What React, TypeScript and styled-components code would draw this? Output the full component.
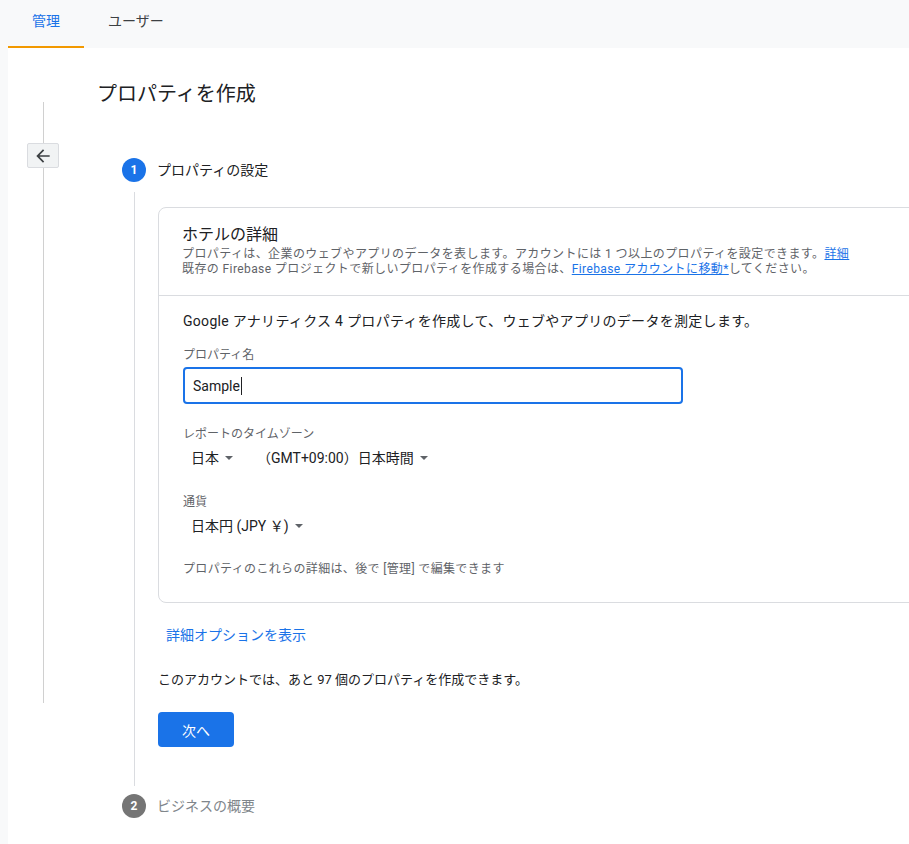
import React from "react";
import styled, { createGlobalStyle } from "styled-components";

const GlobalStyle = createGlobalStyle`
  html, body {
    margin: 0;
    padding: 0;
    overflow: hidden;
    background: #f8f9fa;
  }
  body {
    font-family: Roboto, "Noto Sans CJK JP", "Noto Sans", sans-serif;
    color: #202124;
  }
  * {
    box-sizing: border-box;
  }
`;

const Page = styled.div`
  width: 909px;
  height: 844px;
  padding-left: 8px;
  display: flex;
  flex-direction: column;
  overflow: hidden;
`;

const TabBar = styled.div`
  height: 48px;
  display: flex;
  flex-shrink: 0;
`;

const Tab = styled.div<{ active?: boolean }>`
  height: 48px;
  padding: 0 24px 4px;
  display: flex;
  align-items: center;
  font-size: 14px;
  line-height: 20px;
  color: ${(p) => (p.active ? "#1a73e8" : "#3c4043")};
  border-bottom: 2px solid ${(p) => (p.active ? "#f29900" : "transparent")};
`;

const Main = styled.div`
  flex: 1;
  background: #fff;
  display: flex;
  overflow: hidden;
`;

// 左側のレール（戻るボタン付き）
const Rail = styled.div`
  width: 70px;
  flex-shrink: 0;
  display: flex;
  flex-direction: column;
  align-items: center;
  padding-top: 54px;
`;

const RailLine = styled.div<{ h: number }>`
  width: 1px;
  height: ${(p) => p.h}px;
  background: #d0d0d0;
`;

const BackButton = styled.button`
  width: 32px;
  height: 25px;
  padding: 0;
  border: 1px solid #dadce0;
  border-radius: 2px;
  background: #f1f3f4;
  display: flex;
  align-items: center;
  justify-content: center;
  color: #3c4043;
`;

const Content = styled.div`
  padding-left: 19px;
  display: flex;
  flex-direction: column;
  min-width: 0;
`;

const Title = styled.h1`
  margin: 32px 0 0;
  font-size: 20px;
  line-height: 28px;
  font-weight: 400;
  color: #202124;
`;

const StepHeader = styled.div<{ top?: number }>`
  margin-top: ${(p) => p.top ?? 0}px;
  margin-left: 25px;
  height: 24px;
  display: flex;
  align-items: center;
  gap: 11px;
`;

const StepNum = styled.div<{ done?: boolean }>`
  width: 24px;
  height: 24px;
  border-radius: 50%;
  background: ${(p) => (p.done ? "#1a73e8" : "#757575")};
  color: #fff;
  font-size: 12px;
  font-weight: 700;
  display: flex;
  align-items: center;
  justify-content: center;
`;

const StepLabel = styled.span<{ muted?: boolean }>`
  font-size: 14px;
  line-height: 24px;
  color: ${(p) => (p.muted ? "#80868b" : "#202124")};
`;

const StepBody = styled.div`
  margin-left: 25px;
  display: flex;
`;

const LineCol = styled.div`
  width: 24px;
  flex-shrink: 0;
  display: flex;
  justify-content: center;
  padding: 10px 0 8px;
`;

const StepLine = styled.div`
  width: 1px;
  background: #dadce0;
`;

const StepContent = styled.div`
  margin-left: 12px;
  padding: 25px 0 47px;
  display: flex;
  flex-direction: column;
  align-items: flex-start;
`;

const Card = styled.div`
  width: 780px;
  border: 1px solid #dadce0;
  border-radius: 8px;
`;

const CardHead = styled.div`
  padding: 15px 23px 18px;
  border-bottom: 1px solid #dadce0;
`;

const CardTitle = styled.div`
  font-size: 16px;
  line-height: 24px;
  color: #202124;
`;

const Sub = styled.div`
  font-size: 12px;
  line-height: 15px;
  letter-spacing: 0.4px;
  color: #5f6368;
`;

const Link = styled.a`
  color: #1a73e8;
  text-decoration: underline;
`;

const CardBody = styled.div`
  padding: 15px 24px 25px;
  display: flex;
  flex-direction: column;
  align-items: flex-start;
`;

const Lead = styled.div`
  font-size: 14px;
  line-height: 20px;
  letter-spacing: 0.3px;
  color: #202124;
`;

const Label = styled.div<{ top: number }>`
  margin-top: ${(p) => p.top}px;
  font-size: 12px;
  line-height: 16px;
  color: #5f6368;
`;

const Field = styled.div`
  margin-top: 4px;
  width: 500px;
  height: 37px;
  border: 2px solid #1a73e8;
  border-radius: 4px;
  padding: 0 8px;
  display: flex;
  align-items: center;
  font-size: 14px;
  color: #202124;
`;

const TextCaret = styled.span`
  width: 1px;
  height: 18px;
  background: #202124;
  margin-left: 1px;
`;

const SelectRow = styled.div`
  margin-top: 6px;
  display: flex;
  gap: 8px;
`;

const Select = styled.div`
  padding: 0 8px;
  display: flex;
  align-items: center;
  gap: 6px;
  font-size: 14px;
  line-height: 20px;
  color: #202124;
`;

const Note = styled.div`
  margin-top: 25px;
  font-size: 12px;
  line-height: 16px;
  letter-spacing: 0.35px;
  color: #5f6368;
`;

const TextButton = styled.button`
  margin-top: 14px;
  padding: 8px;
  border: none;
  background: none;
  font-family: inherit;
  font-size: 14px;
  line-height: 20px;
  color: #1a73e8;
`;

const Remain = styled.div`
  margin-top: 17px;
  font-size: 13px;
  line-height: 20px;
  color: #202124;
`;

const Primary = styled.button`
  margin-top: 22px;
  width: 76px;
  height: 35px;
  border: none;
  border-radius: 4px;
  background: #1a73e8;
  color: #fff;
  font-family: inherit;
  font-size: 14px;
`;

const DropCaret = () => (
  <svg width="8" height="4" viewBox="0 0 8 4">
    <polygon points="0,0 8,0 4,4" fill="#5f6368" />
  </svg>
);

const ArrowBack = () => (
  <svg width="20" height="20" viewBox="0 0 24 24" fill="currentColor">
    <path d="M20 11H7.83l5.59-5.59L12 4l-8 8 8 8 1.41-1.41L7.83 13H20v-2z" />
  </svg>
);

function App() {
  return (
    <>
      <GlobalStyle />
      <Page>
        <TabBar>
          <Tab active>管理</Tab>
          <Tab>ユーザー</Tab>
        </TabBar>
        <Main>
          <Rail>
            <RailLine h={41} />
            <BackButton aria-label="戻る">
              <ArrowBack />
            </BackButton>
            <RailLine h={535} />
          </Rail>
          <Content>
            <Title>プロパティを作成</Title>

            <StepHeader top={50}>
              <StepNum done>1</StepNum>
              <StepLabel>プロパティの設定</StepLabel>
            </StepHeader>
            <StepBody>
              <LineCol>
                <StepLine />
              </LineCol>
              <StepContent>
                <Card>
                  <CardHead>
                    <CardTitle>ホテルの詳細</CardTitle>
                    <Sub>
                      プロパティは、企業のウェブやアプリのデータを表します。アカウントには 1 つ以上のプロパティを設定できます。<Link>詳細</Link>
                    </Sub>
                    <Sub>
                      既存の Firebase プロジェクトで新しいプロパティを作成する場合は、<Link>Firebase アカウントに移動*</Link>してください。
                    </Sub>
                  </CardHead>
                  <CardBody>
                    <Lead>Google アナリティクス 4 プロパティを作成して、ウェブやアプリのデータを測定します。</Lead>
                    <Label top={16}>プロパティ名</Label>
                    <Field>
                      Sample
                      <TextCaret />
                    </Field>
                    <Label top={22}>レポートのタイムゾーン</Label>
                    <SelectRow>
                      <Select>
                        日本 <DropCaret />
                      </Select>
                      <Select>
                        （GMT+09:00）日本時間 <DropCaret />
                      </Select>
                    </SelectRow>
                    <Label top={26}>通貨</Label>
                    <SelectRow>
                      <Select>
                        日本円 (JPY ￥) <DropCaret />
                      </Select>
                    </SelectRow>
                    <Note>プロパティのこれらの詳細は、後で [管理] で編集できます</Note>
                  </CardBody>
                </Card>
                <TextButton>詳細オプションを表示</TextButton>
                <Remain>このアカウントでは、あと 97 個のプロパティを作成できます。</Remain>
                <Primary>次へ</Primary>
              </StepContent>
            </StepBody>

            <StepHeader>
              <StepNum>2</StepNum>
              <StepLabel muted>ビジネスの概要</StepLabel>
            </StepHeader>
          </Content>
        </Main>
      </Page>
    </>
  );
}

export default App;
